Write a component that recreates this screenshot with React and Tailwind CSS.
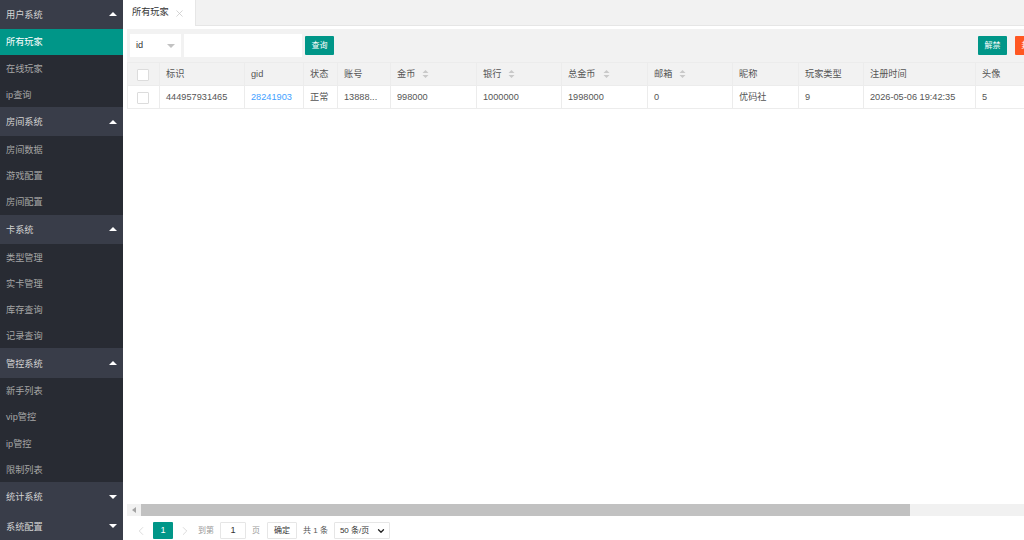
import React from "react";
import { X, ChevronLeft, ChevronRight, ChevronDown } from "lucide-react";

const MENU = [
  { title: "用户系统", open: true, items: ["所有玩家", "在线玩家", "ip查询"] },
  { title: "房间系统", open: true, items: ["房间数据", "游戏配置", "房间配置"] },
  { title: "卡系统", open: true, items: ["类型管理", "实卡管理", "库存查询", "记录查询"] },
  { title: "管控系统", open: true, items: ["新手列表", "vip管控", "ip管控", "限制列表"] },
  { title: "统计系统", open: false, items: [] },
  { title: "系统配置", open: false, items: [] },
];

const COLUMNS = [
  { label: "", width: 32 },
  { label: "标识", width: 85, value: "444957931465" },
  { label: "gid", width: 59, value: "28241903", link: true },
  { label: "状态", width: 34, value: "正常" },
  { label: "账号", width: 53, value: "13888..." },
  { label: "金币", width: 86, value: "998000", sort: true },
  { label: "银行", width: 85, value: "1000000", sort: true },
  { label: "总金币", width: 86, value: "1998000", sort: true },
  { label: "邮箱", width: 85, value: "0", sort: true },
  { label: "昵称", width: 66, value: "优码社" },
  { label: "玩家类型", width: 65, value: "9" },
  { label: "注册时间", width: 112, value: "2026-05-06 19:42:35" },
  { label: "头像", width: 49, value: "5" },
];

// small triangle used by the sidebar and the select
const Caret = ({ up, className }) => (
  <svg width="8" height="4" viewBox="0 0 8 4" className={className}>
    <path d={up ? "M4 0L8 4H0z" : "M4 4L0 0h8z"} fill="currentColor" />
  </svg>
);

const SortIcon = () => (
  <svg width="7" height="8" viewBox="0 0 7 8" className="ml-[7px] text-[#c9c9c9]">
    <path d="M3.5 0L6.5 3H.5zM3.5 8L.5 5h6z" fill="currentColor" />
  </svg>
);

const Checkbox = () => (
  <div className="ml-[3px] h-[12px] w-[12px] rounded-[1px] border border-[#dcdcdc] bg-white" />
);

const Sidebar = () => (
  <aside className="-mt-[0.5px] w-[123px] shrink-0 bg-[#282b33]">
    {MENU.map((group) => (
      <div key={group.title}>
        <div className="flex h-[29.2px] items-center justify-between bg-[#393d49] px-[6px] text-[#d4d4d4]">
          <span className="pt-[3px]">{group.title}</span>
          <Caret up={group.open} className="text-white" />
        </div>
        {group.items.map((item) => (
          <div
            key={item}
            className={
              item === "所有玩家"
                ? "flex h-[26.15px] items-center bg-[#009688] pl-[6px] pt-[3px] text-white"
                : "flex h-[26.15px] items-center pl-[6px] pt-[3px] text-[#a6a6a6]"
            }
          >
            {item}
          </div>
        ))}
      </div>
    ))}
  </aside>
);

const PlayerTable = () => (
  <table className="w-[897px] table-fixed border-collapse text-[#555555]">
    <colgroup>
      {COLUMNS.map((col, i) => (
        <col key={i} style={{ width: col.width }} />
      ))}
    </colgroup>
    <thead>
      <tr className="h-[23px] bg-[#f2f2f2]">
        {COLUMNS.map((col, i) => (
          <th key={i} className="border border-[#ececec] px-[6px] pt-px text-left font-normal">
            {i === 0 ? (
              <Checkbox />
            ) : (
              <span className="flex items-center">
                {col.label}
                {col.sort && <SortIcon />}
              </span>
            )}
          </th>
        ))}
      </tr>
    </thead>
    <tbody>
      <tr className="h-[23px] bg-white">
        {COLUMNS.map((col, i) => (
          <td key={i} className="border border-[#ececec] px-[6px] pt-px">
            {i === 0 ? (
              <Checkbox />
            ) : (
              <span className={col.link ? "text-[#3fa1ff]" : ""}>{col.value}</span>
            )}
          </td>
        ))}
      </tr>
    </tbody>
  </table>
);

const Pagination = () => (
  <div className="flex h-[24px] shrink-0 items-center pl-[7px] pt-[5px] text-[8px] text-[#999999]">
    <ChevronLeft size={14} strokeWidth={1} className="text-[#c2c2c2]" />
    <span className="ml-[5px] flex h-[17px] w-[20px] items-center justify-center rounded-[1px] bg-[#009688] text-[9.2px] text-white">
      1
    </span>
    <ChevronRight size={14} strokeWidth={1} className="ml-[5px] text-[#c2c2c2]" />
    <span className="ml-[6px]">到第</span>
    <span className="ml-[6px] flex h-[17px] w-[26px] items-center justify-center rounded-[1px] border border-[#e6e6e6] text-[9.2px] text-[#333333]">
      1
    </span>
    <span className="ml-[6px]">页</span>
    <span className="ml-[7px] flex h-[17px] w-[30px] items-center justify-center rounded-[1px] border border-[#e6e6e6] text-[#333333]">
      确定
    </span>
    <span className="ml-[6px] text-[#555555]">共 1 条</span>
    <span className="ml-[6px] flex h-[17px] w-[56px] items-center justify-between rounded-[1px] border border-[#e6e6e6] pl-[5px] pr-[3px] text-[#333333]">
      50 条/页
      <ChevronDown size={10} strokeWidth={3} className="text-[#222222]" />
    </span>
  </div>
);

export default function App() {
  return (
    <div className="flex h-[540px] w-[1024px] overflow-hidden bg-white font-['Liberation_Sans','Noto_Sans_CJK_SC',sans-serif] text-[9.2px]">
      <Sidebar />
      <main className="flex min-w-0 flex-1 flex-col">
        {/* tab bar */}
        <div className="flex h-[26px] shrink-0 border-b border-[#e6e6e6] bg-[#f2f2f2]">
          <div className="-mb-px flex w-[73px] items-center border-r border-[#e6e6e6] bg-white pl-[9px] text-[#333333]">
            所有玩家
            <X size={11} strokeWidth={1.5} className="ml-[5px] text-[#c2c2c2]" />
          </div>
        </div>
        <div className="flex min-h-0 flex-1 flex-col pl-[4px] pt-[3px]">
          {/* toolbar, the last button runs past the window */}
          <div className="flex h-[33px] w-[917px] shrink-0 items-center bg-[#f2f2f2] pl-[3px]">
            <div className="flex h-[23px] w-[51px] items-center justify-between bg-white px-[6px] pt-px text-[#333333]">
              id
              <Caret className="text-[#c2c2c2]" />
            </div>
            <div className="ml-[3px] h-[23px] w-[118px] bg-white" />
            <button className="ml-[3px] h-[19px] w-[29px] rounded-[1px] bg-[#009688] pt-px text-[8px] text-white">查询</button>
            <button className="ml-auto h-[19px] w-[29px] shrink-0 rounded-[1px] bg-[#009688] pt-px text-[8px] text-white">解禁</button>
            <button className="ml-[8px] h-[19px] w-[29px] shrink-0 rounded-[1px] bg-[#ff5722] pt-px text-[8px] text-white">封禁</button>
          </div>
          <div className="min-h-0 flex-1 overflow-hidden">
            <PlayerTable />
          </div>
          {/* horizontal scrollbar */}
          <div className="flex h-[12px] shrink-0 bg-[#f1f1f1]">
            <div className="flex w-[14px] items-center justify-center">
              <svg width="4" height="6" viewBox="0 0 4 6" className="text-[#a3a3a3]">
                <path d="M0 3l4-3v6z" fill="currentColor" />
              </svg>
            </div>
            <div className="w-[769px] bg-[#c1c1c1]" />
          </div>
          <Pagination />
        </div>
      </main>
    </div>
  );
}
